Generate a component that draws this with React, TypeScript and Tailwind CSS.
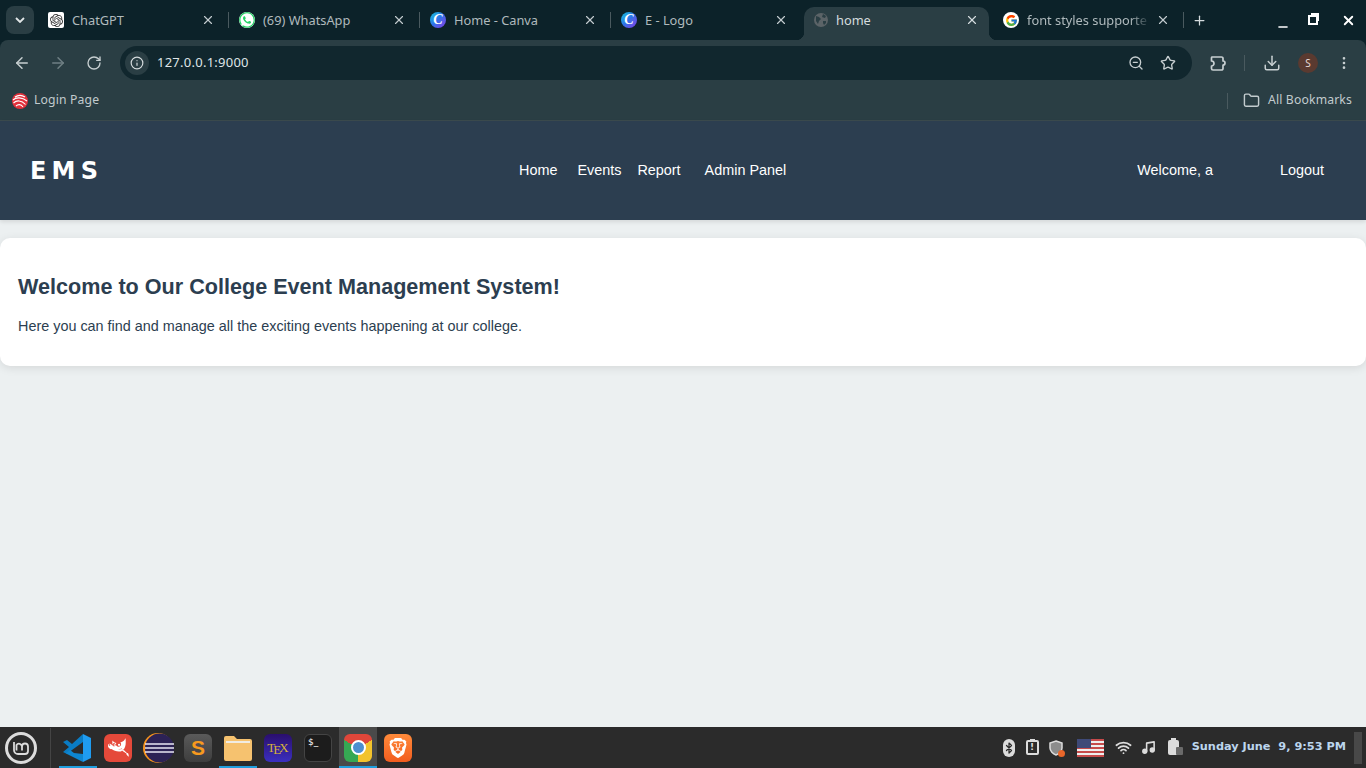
import { ArrowLeft, ArrowRight, Bluetooth, Download, EllipsisVertical, Folder, Info, Minus, Music, Plus, RotateCw, Star, Wifi, X, ZoomOut } from "lucide-react";
import { FcGoogle } from "react-icons/fc";
import { SiBrave, SiGimp, SiOpenai, SiWhatsapp } from "react-icons/si";
import type { ReactNode } from "react";

function CanvaIcon() {
  return (
    <div className="w-4 h-4 rounded-full bg-gradient-to-br from-[#18c4d8] via-[#2f6fe8] to-[#7a32e6] flex items-center justify-center text-white italic font-semibold text-[14px] font-['Liberation_Serif',serif] leading-none">
      C
    </div>
  );
}

function GlobeIcon() {
  return (
    <svg width="16" height="16" viewBox="0 0 16 16">
      <circle cx="8" cy="8" r="7" fill="#5b6367" />
      <path d="M3 4l3 1 2 2-2 2-1 3-2-3zM10 2l3 2-1 2-3-1zM10 9l3 0 0 2-2 2-1-2z" fill="#2a3e44" />
    </svg>
  );
}

function Tab({ icon, title, fade, sep = true }: { icon: ReactNode; title: string; fade?: boolean; sep?: boolean }) {
  return (
    <div className="relative w-[191px] h-[40px] shrink-0 flex items-center pl-[10px]">
      <div className="w-4 h-4 shrink-0 flex items-center justify-center">{icon}</div>
      <span className={`ml-[8px] w-[129px] pt-px overflow-hidden whitespace-nowrap text-[12.8px] text-[#b0babd] ${fade ? "[mask-image:linear-gradient(to_right,black_80%,transparent_96%)]" : ""}`}>
        {title}
      </span>
      <X className="w-[14px] h-[14px] text-[#c2cbce]" strokeWidth={2} />
      {sep && <div className="absolute right-0 top-[12px] w-px h-4 bg-[#4a5a5f]" />}
    </div>
  );
}

function ActiveTab({ icon, title }: { icon: ReactNode; title: string }) {
  return (
    <div className="relative ml-[2px] mr-[4px] w-[185px] h-[33px] self-end shrink-0 flex items-center pl-[9px] pb-[7px] bg-[#2a3e44] rounded-t-[10px]">
      <div className="absolute -left-[8px] bottom-0 w-2 h-2 bg-[radial-gradient(circle_at_0_0,transparent_8px,#2a3e44_8.5px)]" />
      <div className="absolute -right-[8px] bottom-0 w-2 h-2 bg-[radial-gradient(circle_at_100%_0,transparent_8px,#2a3e44_8.5px)]" />
      <div className="w-4 h-4 shrink-0 flex items-center justify-center">{icon}</div>
      <span className="ml-[7px] w-[129px] pt-px text-[12.8px] text-[#d5dcde] whitespace-nowrap">{title}</span>
      <X className="w-[14px] h-[14px] text-[#d5dcde]" strokeWidth={2} />
    </div>
  );
}

function Toolbar() {
  return (
    <div className="h-[46px] bg-[#2a3e44] flex items-center rounded-t-[8px] text-[#c7cfd1]">
      <ArrowLeft className="w-[18px] h-[18px] ml-[13px]" />
      <ArrowRight className="w-[18px] h-[18px] ml-[18px] text-[#6f7f84]" />
      <RotateCw className="w-[16px] h-[16px] ml-[19px]" />
      <div className="ml-[18px] w-[1072px] h-[34px] rounded-full bg-[#11272e] flex items-center pl-[5px]">
        <div className="w-[24px] h-[24px] rounded-full bg-[#2a3e44] flex items-center justify-center">
          <Info className="w-[14px] h-[14px] text-[#d5dcde]" />
        </div>
        <span className="ml-[8px] text-[13px] tracking-[0.25px] text-[#dfe5e7]">127.0.0.1:9000</span>
        <ZoomOut className="w-[16px] h-[16px] ml-auto" />
        <Star className="w-[16px] h-[16px] ml-[16px] mr-[16px]" />
      </div>
      <svg className="ml-[17px]" width="18" height="18" viewBox="0 0 18 18" fill="none" stroke="currentColor" strokeWidth="1.7" strokeLinejoin="round">
        <path d="M3 3h9.5a1.5 1.5 0 0 1 1.5 1.5V7a2 2 0 0 1 0 4v3.5a1.5 1.5 0 0 1-1.5 1.5H4a1.5 1.5 0 0 1-1.5-1.5V12a2.5 2.5 0 0 0 0-5V4a1 1 0 0 1 .5-1z" />
      </svg>
      <div className="ml-[17px] w-px h-4 bg-[#4a5a5f]" />
      <Download className="w-[18px] h-[18px] ml-[18px]" />
      <div className="ml-[17px] w-[20px] h-[20px] rounded-full bg-[#5a3a30] text-[#e6d9d5] text-[10px] flex items-center justify-center">S</div>
      <EllipsisVertical className="w-[16px] h-[16px] ml-[18px]" />
    </div>
  );
}

function BookmarksBar() {
  return (
    <div className="h-[35px] pb-[5px] bg-[#2a3e44] border-b border-[#3b4a4d] flex items-center text-[12.2px] tracking-[0.15px] text-[#c2cbce]">
      <svg className="ml-[12px]" width="16" height="16" viewBox="0 0 16 16" fill="none">
        <circle cx="8" cy="8" r="8" fill="#e2313c" />
        <path d="M1 7c3-3 9-3 14 1M1.5 10c3-3 8-3 12 1.500M4 13c2-2 5-2 7 1M3 4c3-2 7-2 10 0" stroke="#fff" strokeWidth="1.1" />
      </svg>
      <span className="ml-[6px]">Login Page</span>
      <div className="ml-auto w-px h-4 bg-[#4a5a5f]" />
      <Folder className="w-[17px] h-[17px] ml-[15px]" />
      <span className="ml-[8px] mr-[14px]">All Bookmarks</span>
    </div>
  );
}

function Chrome() {
  return (
    <div className="bg-[#0c2229] font-['Noto_Sans',sans-serif] shrink-0">
      <div className="h-[40px] flex items-center">
        <div className="ml-[6px] w-[28px] h-[28px] rounded-[8px] bg-[#2a3e44] flex items-center justify-center">
          <svg width="10" height="6" viewBox="0 0 10 6" fill="none" stroke="#e2e7e8" strokeWidth="1.8"><path d="M1 1l4 4 4-4" /></svg>
        </div>
        <div className="ml-[4px] flex h-full">
          <Tab title="ChatGPT" icon={<div className="w-4 h-4 bg-white rounded-[2px] flex items-center justify-center"><SiOpenai className="w-[13px] h-[13px] text-[#333]" /></div>} />
          <Tab title="(69) WhatsApp" icon={<SiWhatsapp className="w-4 h-4 text-[#25d366] bg-[#fff] rounded-full" />} />
          <Tab title="Home - Canva" icon={<CanvaIcon />} />
          <Tab title="E - Logo" icon={<CanvaIcon />} sep={false} />
          <ActiveTab title="home" icon={<GlobeIcon />} />
          <Tab title="font styles supporte" icon={<div className="w-4 h-4 bg-white rounded-full flex items-center justify-center"><FcGoogle className="w-[13px] h-[13px]" /></div>} fade />
        </div>
        <Plus className="w-[15px] h-[15px] ml-[8px] text-[#d5dcde]" strokeWidth={2} />
        <Minus className="w-[14px] h-[14px] ml-[69px] mt-[13px] text-white" strokeWidth={2.5} />
        <div className="ml-[18px] relative w-[10px] h-[10px] border-2 border-white">
          <div className="absolute -top-[4px] -right-[3px] w-[8px] h-[8px] border-t-2 border-r-2 border-white" />
        </div>
        <X className="w-[15px] h-[15px] ml-[23px] text-white" strokeWidth={3} />
      </div>
      <Toolbar />
      <BookmarksBar />
    </div>
  );
}

function Header() {
  return (
    <header className="h-[99px] bg-[#2c3e50] flex items-center text-white text-[14.4px] shrink-0 shadow-[0_2px_4px_rgba(0,0,0,0.1)] relative font-['Liberation_Sans',sans-serif]">
      <div className="ml-[30px] w-[68px] font-['DejaVu_Sans',sans-serif] font-bold text-[24px] tracking-[5.2px] whitespace-nowrap">EMS</div>
      <nav className="ml-[421px] flex">
        <a>Home</a>
        <a className="ml-[20px]">Events</a>
        <a className="ml-[16px]">Report</a>
        <a className="ml-[24px]">Admin Panel</a>
      </nav>
      <div className="ml-auto mr-[42px] flex">
        <span>Welcome, a</span>
        <a className="ml-[67px]">Logout</a>
      </div>
    </header>
  );
}

function Chip({ className, children }: { className: string; children?: ReactNode }) {
  return <div className={`w-[28px] h-[28px] rounded-[6px] flex items-center justify-center ${className}`}>{children}</div>;
}

function DockItem({ children, running, active }: { children: ReactNode; running?: boolean; active?: boolean }) {
  return (
    <div className={`relative w-[38px] h-[41px] flex items-center justify-center ${active ? "bg-[#4a4a4a]" : ""}`}>
      {children}
      {running && <div className="absolute bottom-0 left-0 right-0 h-[2px] bg-[#1f9ede]" />}
    </div>
  );
}

function Taskbar() {
  return (
    <footer className="mt-auto h-[41px] bg-[#2b2b2b] flex items-center shrink-0 font-['DejaVu_Sans',sans-serif]">
      <div className="ml-[5px] w-[32px] h-[32px] rounded-full border-[3px] border-[#dcdcdc] flex items-center justify-center">
        <svg width="18" height="16" viewBox="0 0 18 16" fill="none" stroke="#dcdcdc" strokeWidth="1.8">
          <path d="M2 2v8a4 4 0 0 0 4 4h7a3 3 0 0 0 3-3V6.500a3 3 0 0 0-6 0V10.500M10 6.500a3 3 0 0 0-5.500-1.500V10.500" />
        </svg>
      </div>
      <div className="ml-[13px] w-px h-[40px] bg-[#444]" />
      <div className="ml-[8px] flex items-center gap-[2px]">
        <DockItem running>
          <svg width="30" height="30" viewBox="0 0 30 30" className="-ml-[2px]">
            <path d="M21 1l8 4v20l-8 4z" fill="#1f9cf0" />
            <path d="M21 1v8L10 17l-5 4-4-2 6-5-6-5 4-2 5 4z" fill="#0a7cc4" />
            <path d="M21 21v8L5 21l-1-1 4-3 4 3z" fill="#0e86d0" />
          </svg>
        </DockItem>
        <DockItem><Chip className="bg-[#e5493a]"><SiGimp className="w-[21px] h-[21px] text-white" /></Chip></DockItem>
        <DockItem>
          <svg width="32" height="32" viewBox="0 0 32 32">
            <circle cx="16" cy="16" r="15" fill="#f7941e" />
            <circle cx="17.500" cy="16" r="14.500" fill="#2c2255" />
            <path d="M3 12h29M3 16h29M3 20h29" stroke="#e8e6f2" strokeWidth="1.500" />
          </svg>
        </DockItem>
        <DockItem>
          <Chip className="bg-gradient-to-b from-[#5a5a5a] to-[#3e3e3e] text-[#f79a1e] font-bold text-[21px] font-['Liberation_Sans',sans-serif]">S</Chip>
        </DockItem>
        <DockItem running>
          <svg width="28" height="26" viewBox="0 0 28 26">
            <path d="M0 3a2 2 0 0 1 2-2h8l3 3h13a2 2 0 0 1 2 2v18a2 2 0 0 1-2 2H2a2 2 0 0 1-2-2z" fill="#f6c26f" />
            <path d="M2 6h24v2H2z" fill="#f0ece2" />
          </svg>
        </DockItem>
        <DockItem>
          <Chip className="bg-gradient-to-b from-[#2a0e6e] to-[#3a2fc0] text-[#d6b23a] text-[13px] font-['Liberation_Serif',serif]">
            <span>T</span>
            <span className="-ml-[2px] translate-y-[2px]">E</span>
            <span className="-ml-[2px]">X</span>
          </Chip>
        </DockItem>
        <DockItem>
          <Chip className="bg-[#1c1c1c] border border-[#444] text-white text-[9px] !items-start !justify-start pl-[3px] pt-[1px]">$_</Chip>
        </DockItem>
        <DockItem running active>
          <div className="w-[28px] h-[28px] rounded-[6px] bg-[conic-gradient(from_300deg,#e0463a_0deg_120deg,#f3c32c_120deg_240deg,#36a853_240deg_360deg)] flex items-center justify-center">
            <div className="w-[15px] h-[15px] rounded-full bg-[#4d8fd0] border-2 border-white" />
          </div>
        </DockItem>
        <DockItem>
          <Chip className="bg-gradient-to-b from-[#ff8a3a] to-[#f25c1e]"><SiBrave className="w-[20px] h-[20px] text-white" /></Chip>
        </DockItem>
      </div>
      <div className="ml-auto flex items-center text-[#dcdcdc]">
        <div className="w-[12px] h-[18px] rounded-full bg-[#dcdcdc] flex items-center justify-center"><Bluetooth className="w-[12px] h-[12px] text-[#2b2b2b]" strokeWidth={2.5} /></div>
        <div className="relative ml-[11px] w-[13px] h-[15px] border-2 border-[#dcdcdc] rounded-[2px] text-[9px] font-bold leading-none flex items-center justify-center">
          <div className="absolute -top-[3px] left-[2px] w-[5px] h-[2px] bg-[#dcdcdc]" />
          !
        </div>
        <div className="relative ml-[10px] w-[14px] h-[16px]">
          <svg width="14" height="16" viewBox="0 0 14 16" fill="none">
            <path d="M7 1l6 2v5c0 3-3 6-6 7-3-1-6-4-6-7V3z" fill="#8c8c8c" stroke="#dcdcdc" strokeWidth="1.500" />
          </svg>
          <div className="absolute -right-[2px] -bottom-[1px] w-[7px] h-[7px] rounded-full bg-[#e8662a]" />
        </div>
        <div className="relative ml-[14px] w-[27px] h-[18px] overflow-hidden bg-[repeating-linear-gradient(to_bottom,#c64a4a_0_2px,#eee_2px_4px)]">
          <div className="absolute top-0 left-0 w-[14px] h-[9px] bg-[#3f4a78]" />
        </div>
        <Wifi className="ml-[11px] w-[17px] h-[17px]" strokeWidth={2.5} />
        <Music className="ml-[9px] w-[15px] h-[15px] [&_circle]:fill-current" strokeWidth={2.5} />
        <div className="relative ml-[12px] w-[11px] h-[15px] bg-[#dcdcdc] rounded-[2px]">
          <div className="absolute -top-[2px] left-[3px] w-[5px] h-[2px] bg-[#dcdcdc]" />
          <div className="absolute -right-[4px] bottom-0 w-[7px] h-[8px] bg-[#6a6a6a] rounded-[1px]" />
        </div>
        <span className="ml-[13px] text-[11.3px] font-bold text-[#bcd6ee] whitespace-pre">Sunday June  9, 9:53 PM</span>
        <div className="ml-[8px] mr-[4px] w-[8px] h-[32px] bg-[#484848]" />
      </div>
    </footer>
  );
}

export default function App() {
  return (
    <div className="h-screen flex flex-col bg-[#ecf0f1] overflow-hidden">
      <Chrome />
      <Header />
      <main className="mt-[18px] bg-white rounded-[10px] h-[128px] px-[18px] pt-[35px] shadow-[0_2px_10px_rgba(0,0,0,0.1)] font-['Liberation_Sans',sans-serif] text-[#2c3e50]">
        <h2 className="text-[21.6px] font-bold leading-[28px]">Welcome to Our College Event Management System!</h2>
        <p className="mt-[17px] text-[14.4px] leading-[17px]">Here you can find and manage all the exciting events happening at our college.</p>
      </main>
      <Taskbar />
    </div>
  );
}
